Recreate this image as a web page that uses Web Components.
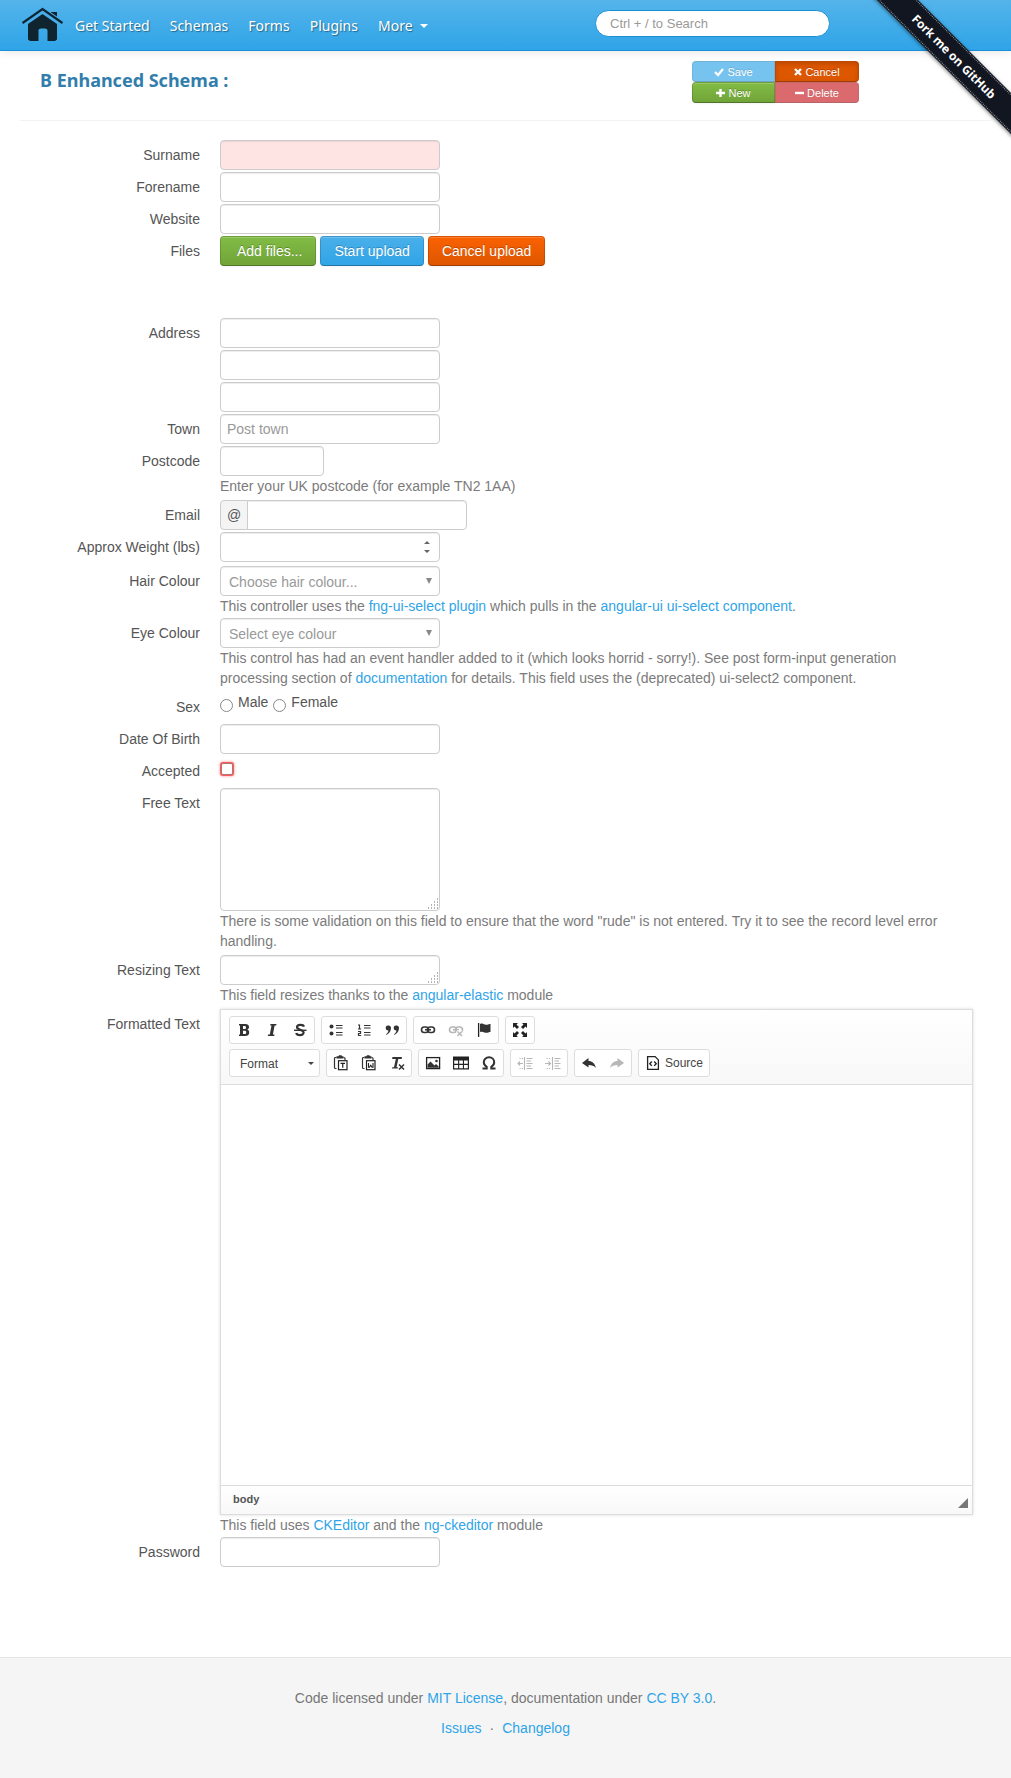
<!DOCTYPE html>
<html lang="en">
<head>
<meta charset="utf-8">
<title>B Enhanced Schema</title>
<style>
  body { margin: 0; background: #fff; color: #555; font: 14px/20px "Liberation Sans", Arial, sans-serif; }
</style>
</head>
<body>
<schema-page></schema-page>

<script>
const BASE = `
  *, *::before, *::after { box-sizing: border-box; }
  a { color: #2fa4e7; text-decoration: none; }
  button, input, select, textarea { font: inherit; margin: 0; }
  svg { display: block; }
`;

function define(name, css, render) {
  customElements.define(name, class extends HTMLElement {
    constructor() {
      super();
      this.attachShadow({ mode: 'open' });
    }
    connectedCallback() {
      const html = typeof render === 'function' ? render(this) : render;
      this.shadowRoot.innerHTML = `<style>${BASE}${css}</style>${html}`;
    }
  });
}

/* ---------- icons ---------- */
const I = (body, w = 16, h = 16) => `<svg width="${w}" height="${h}" viewBox="0 0 ${w} ${h}" aria-hidden="true">${body}</svg>`;
const clip = `<path d="M3.500 2.500H2.500a1 1 0 0 0-1 1V12.500a1 1 0 0 0 1 1H3.500M10.500 2.500h.5a1 1 0 0 1 1 1V5" fill="none" stroke="#333" stroke-width="1.200"/><path d="M3.500 1.200h2L6 .3h2.500l.5.9h1.500v2.300h-7z" fill="#333"/><rect x="5.500" y="5.700" width="8.500" height="9" fill="#fff" stroke="#222" stroke-width="1.200"/>`;
const chain = `<rect x="1.500" y="5" width="7" height="5.500" rx="2.700" fill="none" stroke="#333" stroke-width="1.600"/><rect x="7.500" y="5" width="7" height="5.500" rx="2.700" fill="none" stroke="#333" stroke-width="1.600"/><path d="M5 7.750h6" stroke="#333" stroke-width="1.600"/>`;
const ICONS = {
  bold: I(`<path fill="#333" fill-rule="evenodd" d="M3 2h6.200c2.500 0 3.800 1.100 3.800 3 0 1.400-.7 2.200-1.800 2.600C12.500 8 13.200 9 13.200 10.400c0 2.300-1.500 3.600-4.200 3.600H3v-1.500h1V3.500H3zM7 4v3h1.500C9.500 7 10 6.500 10 5.500S9.500 4 8.500 4zM7 8.800V12h1.700c1 0 1.500-.6 1.500-1.600s-.5-1.600-1.500-1.600z"/>`),
  italic: I(`<path fill="#333" d="M6.500 2H12.500l-.3 1.600H10.600L8.900 12.400h1.600l-.3 1.600H3.800l.3-1.600h1.700L7.500 3.600H6.200z"/>`),
  strike: I(`<path fill="none" stroke="#333" stroke-width="2.200" d="M12 4.600C11.300 2.400 5 2 5 5.300 5 8 11.600 7.500 11.600 10.600c0 3.400-6.800 3-7.400.3"/><path d="M2 8.300h12.500" stroke="#333" stroke-width="1.400"/>`),
  bullets: I(`<circle cx="3.500" cy="4.500" r="2" fill="#333"/><circle cx="3.500" cy="11.500" r="2" fill="#333"/><path d="M8 3.500h6.500M8 6h6.500M8 10.500h6.500M8 13h6.500" stroke="#333" stroke-width="1.200"/>`),
  numbers: I(`<path d="M2 3h1.500v4M2 7h3.200M2 9.500h2.500v2H2.500V13.500H5.200" fill="none" stroke="#333" stroke-width="1.200"/><path d="M8 3.500h6.500M8 6h6.500M8 10.500h6.500M8 13h6.500" stroke="#333" stroke-width="1.200"/>`),
  quote: I(`<path fill="#333" d="M4 3.500a2.500 2.500 0 0 1 3 2.600C7 9 5.400 11.500 2.500 13l-.4-.7c1.400-1 2.200-2.300 2.400-3.700A2.500 2.500 0 0 1 4 3.500zM12 3.500a2.500 2.500 0 0 1 3 2.600C15 9 13.400 11.500 10.500 13l-.4-.7c1.400-1 2.200-2.300 2.400-3.700A2.500 2.500 0 0 1 12 3.500z"/>`),
  link: I(chain),
  unlink: I(chain + `<path d="M9 9l5 5M14 9l-5 5" stroke="#fff" stroke-width="3.500"/><path d="M9.500 9.500l4.500 4.500M14 9.500L9.500 14" stroke="#333" stroke-width="1.500"/>`),
  flag: I(`<path d="M2.600 1v14" stroke="#222" stroke-width="1.300"/><path fill="#333" d="M4 2c3-1.500 4 .8 6 .8 1.500 0 3-.8 4.500-.8v8c-1.500 0-2.500.8-4.300.8C8 10.800 7 9 4 10z"/>`),
  maximize: I(`<g fill="#222"><path d="M1 1h5L4.500 2.500 7 5 5 7 2.500 4.500 1 6zM15 1v5l-1.500-1.500L11 7 9 5l2.500-2.500L10 1zM1 15v-5l1.500 1.500L5 9l2 2-2.500 2.500L6 15zM15 15h-5l1.500-1.500L9 11l2-2 2.500 2.500L15 10z"/></g>`),
  pasteText: I(clip + `<path d="M7.500 8.300h4.500M9.750 8.300v4.400" stroke="#222" stroke-width="1.200"/>`),
  pasteWord: I(clip + `<path d="M7.500 8v4.200h1l1.250-2 1.250 2h1V8" fill="none" stroke="#222" stroke-width="1.100"/>`),
  removeFormat: I(`<path fill="#333" d="M3.500 2H13l-.4 2H9.300L7.500 12.200H9L8.700 13.500H3l.3-1.300h1.700L6.800 4H3.100z"/><path d="M10 9.500l5 5M15 9.500l-5 5" stroke="#333" stroke-width="1.500"/>`),
  image: I(`<rect x="1.600" y="2.600" width="13" height="11" fill="#fff" stroke="#222" stroke-width="1.300"/><circle cx="11.500" cy="6" r="1.300" fill="#333"/><path fill="#333" d="M2.500 12.800V9.500L5.500 6.500l4 4 1.500-1.500 2.700 2.500v1.300z"/>`),
  table: I(`<path fill="#222" fill-rule="evenodd" d="M0 1.500h16v13H0zM1.200 5.500v3.200h3.900V5.500zM6.200 5.500v3.200h3.700V5.500zM11 5.500v3.200h3.800V5.500zM1.200 9.900v3.400h3.900V9.900zM6.200 9.900v3.400h3.700V9.900zM11 9.900v3.400h3.800V9.900z"/>`),
  omega: I(`<path fill="none" stroke="#333" stroke-width="2" d="M1.500 13.500h4.200v-1.700C3.500 10.500 2.800 8.900 2.800 7.200 2.800 4.300 5 2.300 8 2.300s5.200 2 5.200 4.900c0 1.700-.7 3.300-2.900 4.600v1.700h4.200"/>`),
  outdent: I(`<path d="M7.500 2v13M9.500 3.500h6M9.500 6h4.500M9.500 8.500h6M9.500 11h4.500M9.500 13.500h6M1 8.500h5M3 6.500L1 8.500l2 2" fill="none" stroke="#333" stroke-width="1.100"/><path d="M2.500 3.500h4M2.500 13.500h4" stroke="#333" stroke-dasharray="1.200 1.200"/>`),
  indent: I(`<path d="M7.500 2v13M9.500 3.500h6M9.500 6h4.500M9.500 8.500h6M9.500 11h4.500M9.500 13.500h6M0 8.500h5.500M3.500 6.500l2 2-2 2" fill="none" stroke="#333" stroke-width="1.100"/><path d="M1.500 3.500h4M1.500 13.500h4" stroke="#333" stroke-dasharray="1.200 1.200"/>`),
  undo: I(`<path fill="#333" d="M1 8l6.500-5v3C11 6 14 8.500 15 13c-2-2.300-4.300-3-7.500-3v2.500z"/>`),
  redo: I(`<path fill="#333" d="M15 8L8.500 3v3C5 6 2 8.500 1 13c2-2.300 4.300-3 7.500-3v2.500z"/>`),
  source: I(`<path d="M2.600 1.600h7.500l3.300 3.300v9.500H2.600z" fill="#fff" stroke="#222" stroke-width="1.300"/><path d="M6.800 6.500L4.800 8.700l2 2.200M9.200 6.500l2 2.200-2 2.200" fill="none" stroke="#222" stroke-width="1.400"/>`),
  save: I(`<path d="M1 5l3 3 5-6" fill="none" stroke="#fff" stroke-width="2.200"/>`, 10, 10),
  cancel: I(`<path d="M1 2l6 6M7 2L1 8" stroke="#fff" stroke-width="2.400"/>`, 8, 10),
  plus: I(`<path d="M0 5h9M4.500 1v8" stroke="#fff" stroke-width="2.400"/>`, 9, 10),
  minus: I(`<path d="M0 5h9" stroke="#fff" stroke-width="2.400"/>`, 9, 10),
};

/* ---------- top bar ---------- */
define('nav-link', `
  :host { display: block; }
  a { display: flex; align-items: center; gap: 7px; padding: 16px 10px 14px; color: #fff; text-shadow: 1px 1px 1px rgba(0,0,0,.4);
      font: 14px/20px "Noto Sans", "Open Sans", sans-serif; }
  i { border: 4px solid transparent; border-top-color: #fff; border-bottom: 0; }
`, el => `<a href="#"><slot></slot>${el.hasAttribute('menu') ? '<i></i>' : ''}</a>`);

define('site-navbar', `
  :host { display: block; }
  nav { display: flex; align-items: flex-start; height: 51px; padding-left: 22px; background: linear-gradient(#54b4eb, #2fa4e7);
        border-bottom: 1px solid #1990d5; box-shadow: 0 1px 10px rgba(0,0,0,.1); }
  .home { margin: 7px 2px 0 0; }
  form { margin: 10px 0 0 auto; padding-right: 181px; }
  input { display: block; width: 235px; height: 27px; padding: 4px 14px; border: 1px solid #1990d5; border-radius: 15px;
          background: #fff; font-size: 13px; line-height: 17px; color: #555; outline: 0; }
  input::placeholder { color: #999; }
`, `
  <nav>
    <a class="home" href="#" aria-label="Home">
      <svg width="41" height="35" viewBox="0 0 41 35"><path fill="#10242f" d="M6 17L20.500 7 35 17V32.500L33 34H25.500V24c0-2-1-2.500-4.500-2.500S16.500 22 16.500 24V34H8L6 32.500z"/><path fill="#10242f" d="M29 5h6v8l-6-4z"/><path d="M.5 16.500L20.500 2.500l20 14" fill="none" stroke="#48ade9" stroke-width="5"/><path d="M.5 16L20.500 2l20 14" fill="none" stroke="#10242f" stroke-width="2.200"/></svg>
    </a>
    <nav-link>Get Started</nav-link><nav-link>Schemas</nav-link><nav-link>Forms</nav-link><nav-link>Plugins</nav-link><nav-link menu>More</nav-link>
    <form role="search"><input type="text" aria-label="Search" placeholder="Ctrl + / to Search"></form>
  </nav>`);

define('fork-ribbon', `
  :host { position: absolute; top: 0; right: 0; width: 150px; height: 150px; overflow: hidden; pointer-events: none; }
  div { position: absolute; top: 42px; right: -50px; width: 214px; padding: 1px 0; background: #121621;
        box-shadow: 0 1px 4px rgba(0,0,0,.5); transform: rotate(45deg); pointer-events: auto; }
  a { display: block; padding: 3px 0; border: 1px dotted rgba(255,255,255,.55); border-width: 1px 0; color: #fff; text-align: center;
      font: bold 12px/19px "Open Sans", "Liberation Sans", sans-serif; }
`, `<div><a href="#">Fork me on GitHub</a></div>`);

/* ---------- buttons ---------- */
define('action-button', `
  :host { display: block; }
  button { display: flex; align-items: center; justify-content: center; gap: 3px; width: 100%; height: 30px; padding: 0 13px;
           border: 1px solid rgba(0,0,0,.15); border-bottom-color: rgba(0,0,0,.28); border-radius: 4px; background-origin: border-box;
           color: #fff; line-height: 20px; text-shadow: 0 -1px 0 rgba(0,0,0,.25); white-space: nowrap;
           box-shadow: inset 0 1px 0 rgba(255,255,255,.2), 0 1px 2px rgba(0,0,0,.05); }
  :host([tone=green]) button { background-image: linear-gradient(#82bd45, #70a338); }
  :host([tone=blue]) button { background-image: linear-gradient(#4ab0ea, #2fa4e7); }
  :host([tone=orange]) button { background-image: linear-gradient(#fb6202, #dd5600); }
  :host([tone=red]) button { background-color: #c71c22; }
  :host([mini]) button { height: 21px; padding: 0 6px; font-size: 11px; border-radius: var(--corners, 4px); }
  :host([tone=blue][disabled]) button { background: #2fa4e7; }
  button:disabled { opacity: .65; box-shadow: none; }
  :host([pressed]) button { background: #dd5600; box-shadow: inset 0 2px 4px rgba(0,0,0,.15); }
`, el => {
  const icon = el.getAttribute('icon');
  return `<button type="button" ${el.hasAttribute('disabled') ? 'disabled' : ''}>${icon ? ICONS[icon] || '' : ''}${icon === 'none' ? '<span></span>' : ''}<slot></slot></button>`;
});

define('record-header', `
  :host { display: flex; justify-content: space-between; align-items: flex-start; margin: 0 20px 19px; padding: 10px 132px 17px 20px; border-bottom: 1px solid #f2f2f2; }
  h1 { margin: 9px 0 0; font: bold 18px/20px "Noto Sans", "Open Sans", sans-serif; color: #317eac; }
  div { display: grid; grid-template-columns: 83px 84px; }
`, `
  <h1>B Enhanced Schema :</h1>
  <div>
    <action-button mini disabled tone="blue" icon="save" style="--corners:4px 0 0 4px">Save</action-button>
    <action-button mini pressed tone="orange" icon="cancel" style="--corners:0 4px 4px 0">Cancel</action-button>
    <action-button mini tone="green" icon="plus" style="--corners:4px 0 0 4px">New</action-button>
    <action-button mini disabled tone="red" icon="minus" style="--corners:0 4px 4px 0">Delete</action-button>
  </div>`);

/* ---------- form rows ---------- */
const grip = `<svg class="grip" width="12" height="12" viewBox="0 0 12 12" aria-hidden="true"><path d="M10 1h1M7 4h1M10 4h1M4 7h1M7 7h1M10 7h1M1 10h1M4 10h1M7 10h1M10 10h1" stroke="#666"/></svg>`;
const CONTROLS = {
  text: el => `<input id="c" type="text" placeholder="${el.getAttribute('placeholder') || ''}">`,
  password: () => `<input id="c" type="password">`,
  number: () => `<span class="wrap"><input id="c" type="number"><svg class="spin" width="6" height="12" viewBox="0 0 6 12" aria-hidden="true"><path d="M0 3l3-3 3 3zM0 9l3 3 3-3z" fill="#666"/></svg></span>`,
  email: () => `<span class="prepend"><span class="addon">@</span><input id="c" type="email"></span>`,
  lines: () => `<input id="c" type="text"><input type="text" aria-label="Address line 2"><input type="text" aria-label="Address line 3">`,
  select: el => `<span class="wrap"><select id="c"><option>${el.getAttribute('placeholder')}</option></select><svg class="arrow" width="6" height="6" viewBox="0 0 6 6" aria-hidden="true"><path d="M0 0h6L3 6z" fill="#888"/></svg></span>`,
  textarea: el => `<span class="wrap"><textarea id="c" class="${el.getAttribute('size')}"></textarea>${grip}</span>`,
  checkbox: () => `<input id="c" type="checkbox">`,
  radio: () => `<span class="radios" role="radiogroup" aria-label="Sex"><label><input type="radio" name="sex">Male</label><label><input type="radio" name="sex">Female</label></span>`,
};
define('form-row', `
  :host { display: grid; grid-template-columns: 180px minmax(0, 1fr); column-gap: 20px; margin-bottom: 2px; }
  :host([loose]) { margin-bottom: 4px; }
  .label { padding-top: 5px; text-align: right; line-height: 20px; }
  .controls { display: flex; flex-direction: column; gap: 2px; align-items: flex-start; min-height: 30px; }
  input, select, textarea { display: block; width: 220px; height: 30px; padding: 4px 6px; border: 1px solid #ccc; border-radius: 4px;
           background: #fff; color: #555; line-height: 20px; box-shadow: inset 0 1px 1px rgba(0,0,0,.075); outline: 0; }
  input::placeholder { color: #999; }
  :host([invalid]) input[type=text] { background: #ffe4e4; }
  :host([short]) input { width: 104px; }
  input[type=number] { appearance: textfield; }
  .wrap { position: relative; display: block; }
  .spin { position: absolute; right: 10px; top: 9px; }
  .arrow { position: absolute; right: 8px; top: 12px; }
  .grip { position: absolute; right: 1px; bottom: 1px; }
  select { appearance: none; padding: 5px 8px 3px; color: #999; }
  textarea { resize: none; }
  textarea.tall { height: 123px; }
  .prepend { display: flex; }
  .addon { width: 28px; height: 30px; margin-right: -1px; padding: 4px 0; border: 1px solid #ccc; border-radius: 4px 0 0 4px; background: #f4f4f4; text-align: center; line-height: 20px; }
  .prepend input { border-radius: 0 4px 4px 0; }
  input[type=checkbox] { appearance: none; width: 12px; height: 12px; margin: 7px 0 0 1px; padding: 0; border: 1px solid #a77; border-radius: 2px; box-shadow: 0 0 0 1px #ff5a5a, 0 0 3px 1px #f88; }
  .radios { display: flex; gap: 5px; }
  .radios label { display: flex; gap: 5px; line-height: 20px; }
  input[type=radio] { appearance: none; width: 13px; height: 13px; margin-top: 7px; padding: 0; border: 1px solid #888; border-radius: 50%; box-shadow: none; }
  .help { padding-right: 12px; color: #7b7b7b; line-height: 20px; }
  .extra { display: flex; gap: 4px; }
`, el => {
  const kind = el.getAttribute('kind');
  const control = kind === 'custom' ? '<div class="extra"><slot name="control"></slot></div>' : kind === 'block' ? '' : CONTROLS[kind](el);
  const tied = !['custom', 'block', 'radio'].includes(kind);
  const name = el.getAttribute('label');
  return `${tied ? `<label class="label" for="c">${name}</label>` : `<span class="label">${name}</span>`}
    <div><div class="${kind === 'block' ? '' : 'controls'}">${control}<slot name="block"></slot></div><div class="help"><slot></slot></div></div>`;
});

/* ---------- rich text editor ---------- */
define('tool-group', `
  :host { display: flex; height: 28px; border: 1px solid #ddd; border-radius: 3px; background: #fff; }
  button { display: flex; align-items: center; justify-content: center; width: 28px; padding: 0; border: 0; background: none; }
  button:disabled svg { opacity: .35; }
  button.source { gap: 4px; width: auto; padding: 0 6px; font-size: 12px; color: #444; }
`, el => el.getAttribute('tools').split(' ').map(t => {
  const off = ['unlink', 'outdent', 'indent', 'redo'].includes(t);
  return t === 'source' ? `<button type="button" class="source">${ICONS[t]}Source</button>`
    : `<button type="button" aria-label="${t}" ${off ? 'disabled' : ''}>${ICONS[t]}</button>`;
}).join(''));

define('rich-editor', `
  :host { display: block; border: 1px solid #ddd; box-shadow: 0 0 3px rgba(0,0,0,.15); background: #fff; }
  .top { display: flex; flex-direction: column; gap: 5px; padding: 6px 8px 7px; border-bottom: 1px solid #ddd; background: linear-gradient(#fff, #f8f8f8); }
  .row { display: flex; flex-wrap: wrap; gap: 6px; }
  .format { display: flex; align-items: center; justify-content: space-between; width: 91px; height: 28px; padding: 1px 5px 0 10px; border: 1px solid #ddd; border-radius: 3px; background: #fff; color: #444; font-size: 12px; }
  .format i { border: 3px solid transparent; border-top-color: #444; border-bottom: 0; }
  .body { height: 400px; outline: 0; }
  .bottom { display: flex; align-items: center; justify-content: space-between; height: 29px; padding: 0 4px 2px 12px; border-top: 1px solid #ddd; background: linear-gradient(#fff, #f8f8f8); }
  .bottom a { font-size: 11px; font-weight: bold; color: #555; }
  .bottom svg { align-self: flex-end; margin-bottom: 4px; }
`, `
  <div class="top">
    <div class="row">
      <tool-group tools="bold italic strike"></tool-group><tool-group tools="bullets numbers quote"></tool-group>
      <tool-group tools="link unlink flag"></tool-group><tool-group tools="maximize"></tool-group>
    </div>
    <div class="row">
      <button class="format" type="button">Format<i></i></button>
      <tool-group tools="pasteText pasteWord removeFormat"></tool-group><tool-group tools="image table omega"></tool-group>
      <tool-group tools="outdent indent"></tool-group><tool-group tools="undo redo"></tool-group><tool-group tools="source"></tool-group>
    </div>
  </div>
  <div class="body" contenteditable="true" role="textbox" aria-label="Formatted Text"></div>
  <div class="bottom"><a href="#">body</a><svg width="10" height="10" viewBox="0 0 10 10"><path d="M10 0v10H0z" fill="#777"/></svg></div>`);

define('page-footer', `
  :host { display: flex; flex-direction: column; gap: 10px; align-items: center; padding: 30px 0 40px; border-top: 1px solid #e5e5e5; background: #f5f5f5; color: #777; }
  p { margin: 0; line-height: 20px; }
  .links { display: flex; gap: 8px; }
`, `
  <p>Code licensed under <a href="#">MIT License</a>, documentation under <a href="#">CC BY 3.0</a>.</p>
  <p class="links"><a href="#">Issues</a><span>·</span><a href="#">Changelog</a></p>`);

define('schema-page', `
  :host { display: block; position: relative; overflow: hidden; }
  form { padding: 0 38px 88px 20px; }
`, `
  <site-navbar></site-navbar>
  <record-header></record-header>
  <form>
    <form-row kind="text" label="Surname" invalid></form-row>
    <form-row kind="text" label="Forename"></form-row>
    <form-row kind="text" label="Website"></form-row>
    <form-row kind="custom" label="Files">
      <action-button slot="control" tone="green" icon="none">Add files...</action-button>
      <action-button slot="control" tone="blue">Start upload</action-button>
      <action-button slot="control" tone="orange">Cancel upload</action-button>
      <div slot="block" style="height:48px"></div>
    </form-row>
    <form-row kind="lines" label="Address"></form-row>
    <form-row kind="text" label="Town" placeholder="Post town"></form-row>
    <form-row kind="text" label="Postcode" short loose>Enter your UK postcode (for example TN2 1AA)</form-row>
    <form-row kind="email" label="Email"></form-row>
    <form-row kind="number" label="Approx Weight (lbs)" loose></form-row>
    <form-row kind="select" label="Hair Colour" placeholder="Choose hair colour...">This controller uses the <a href="#">fng-ui-select plugin</a> which pulls in the <a href="#">angular-ui ui-select component</a>.</form-row>
    <form-row kind="select" label="Eye Colour" placeholder="Select eye colour" loose>This control has had an event handler added to it (which looks horrid - sorry!). See post form-input generation processing section of <a href="#">documentation</a> for details. This field uses the (deprecated) ui-select2 component.</form-row>
    <form-row kind="radio" label="Sex"></form-row>
    <form-row kind="text" label="Date Of Birth"></form-row>
    <form-row kind="checkbox" label="Accepted"></form-row>
    <form-row kind="textarea" size="tall" label="Free Text" loose>There is some validation on this field to ensure that the word "rude" is not entered. Try it to see the record level error handling.</form-row>
    <form-row kind="textarea" label="Resizing Text" loose>This field resizes thanks to the <a href="#">angular-elastic</a> module</form-row>
    <form-row kind="block" label="Formatted Text"><rich-editor slot="block"></rich-editor>This field uses <a href="#">CKEditor</a> and the <a href="#">ng-ckeditor</a> module</form-row>
    <form-row kind="password" label="Password"></form-row>
  </form>
  <page-footer></page-footer>
  <fork-ribbon></fork-ribbon>`);
</script>
</body>
</html>
